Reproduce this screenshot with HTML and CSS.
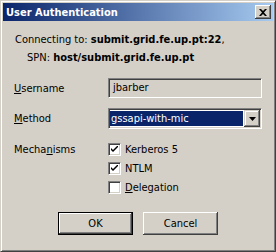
FILE: index.html
```html
<!DOCTYPE html>
<html lang="en">
<head>
<meta charset="UTF-8">
<title>User Authentication</title>
<link rel="stylesheet" href="styles.css">
</head>
<body>

<div class="window">
  <div class="titlebar">
    <span class="title">User Authentication</span>
    <span class="close">
      <svg width="8" height="7" viewBox="0 0 8 7"><path d="M0 0h2l2 2 2-2h2L5 3.5 8 7H6L4 5 2 7H0l3-3.5z" fill="#000"/></svg>
    </span>
  </div>

  <div class="content">
    <div class="connect">
      <div>Connecting to: <b>submit.grid.fe.up.pt:22</b>,</div>
      <div class="spn">SPN: <b>host/submit.grid.fe.up.pt</b></div>
    </div>

    <div class="form">
      <label class="label"><u>U</u>sername</label>
      <div class="textbox">jbarber</div>

      <label class="label label-method"><u>M</u>ethod</label>
      <div class="select">
        <span class="select-value">gssapi-with-mic</span>
        <span class="drop">
          <svg width="7" height="4" viewBox="0 0 7 4"><path d="M0 0h7L3.5 4z" fill="#000"/></svg>
        </span>
      </div>

      <label class="label label-mech">Mecha<u>n</u>isms</label>
      <div class="checks">
        <div class="check">
          <span class="box"><svg width="7" height="7" viewBox="0 0 7 7"><path d="M0 2l2 2 5-5v2L2 6 0 4z" fill="#000"/></svg></span>
          Kerberos 5
        </div>
        <div class="check">
          <span class="box"><svg width="7" height="7" viewBox="0 0 7 7"><path d="M0 2l2 2 5-5v2L2 6 0 4z" fill="#000"/></svg></span>
          NTLM
        </div>
        <div class="check check-deleg">
          <span class="box"></span>
          <span><u>D</u>elegation</span>
        </div>
      </div>
    </div>

    <div class="buttons">
      <button class="btn btn-default">OK</button>
      <button class="btn">Cancel</button>
    </div>
  </div>
</div>

</body>
</html>
```

FILE: styles.css
```css
body {
  margin: 0;
  font-family: "DejaVu Sans Condensed", "DejaVu Sans", sans-serif;
  font-size: 11px;
  color: #000;
}

.window {
  width: 276px;
  height: 252px;
  box-sizing: border-box;
  background: #d4d0c8;
  border: 1px solid;
  border-color: #d4d0c8 #404040 #404040 #d4d0c8;
  box-shadow: inset 1px 1px 0 #fff, inset -1px -1px 0 #808080;
  padding: 2px;
}

.titlebar {
  height: 18px;
  display: flex;
  align-items: center;
  justify-content: space-between;
  padding: 0 2px 0 3px;
  background: linear-gradient(to right, #0a246a, #a6caf0);
}

.title {
  color: #fff;
  font-weight: bold;
}

.close {
  width: 16px;
  height: 14px;
  box-sizing: border-box;
  display: flex;
  align-items: center;
  justify-content: center;
  background: #d4d0c8;
  box-shadow: inset -1px -1px 0 #404040, inset 1px 1px 0 #fff, inset -2px -2px 0 #808080;
}

.content {
  padding: 10px 11px 0 11px;
}

.connect {
  line-height: 18px;
  padding-left: 1px;
}

.connect .spn {
  padding-left: 12px;
}

.form {
  display: grid;
  grid-template-columns: 94px 1fr;
  margin-top: 11px;
  row-gap: 10px;
}

.label {
  display: flex;
  align-items: center;
}

.textbox {
  height: 20px;
  box-sizing: border-box;
  padding: 0 4px;
  line-height: 18px;
  border: 1px solid;
  border-color: #808080 #fff #fff #808080;
  box-shadow: inset 1px 1px 0 #404040, inset -1px -1px 0 #d4d0c8;
}

.select {
  height: 21px;
  box-sizing: border-box;
  display: flex;
  border: 1px solid;
  border-color: #808080 #fff #fff #808080;
  box-shadow: inset 1px 1px 0 #404040, inset -1px -1px 0 #d4d0c8;
  padding: 1px;
  background: #fff;
}

.select-value {
  flex: 1;
  background: #0a246a;
  color: #fff;
  padding-left: 1px;
  line-height: 16px;
  margin: 1px 1px 1px 0;
}

.drop {
  width: 16px;
  display: flex;
  align-items: center;
  justify-content: center;
  background: #d4d0c8;
  box-shadow: inset -1px -1px 0 #404040, inset 1px 1px 0 #d4d0c8, inset -2px -2px 0 #808080, inset 2px 2px 0 #fff;
}

.label-mech {
  align-items: flex-start;
  margin-top: 4px;
}

.checks {
  margin-top: 4px;
}

.check {
  display: flex;
  align-items: center;
  gap: 4px;
  height: 13px;
  margin-bottom: 6px;
}

.check-deleg {
  margin-top: 4px;
  margin-bottom: 0;
}

.box {
  width: 13px;
  height: 13px;
  box-sizing: border-box;
  display: flex;
  align-items: center;
  justify-content: center;
  background: #fff;
  border: 1px solid;
  border-color: #808080 #fff #fff #808080;
  box-shadow: inset 1px 1px 0 #404040, inset -1px -1px 0 #d4d0c8;
}

.buttons {
  display: flex;
  justify-content: center;
  gap: 10px;
  margin-top: 18px;
}

.btn {
  width: 75px;
  height: 23px;
  font: inherit;
  color: #000;
  background: #d4d0c8;
  border: none;
  padding: 0;
  box-shadow: inset -1px -1px 0 #404040, inset 1px 1px 0 #fff, inset -2px -2px 0 #808080;
}

.btn-default {
  border: 1px solid #000;
}
```
